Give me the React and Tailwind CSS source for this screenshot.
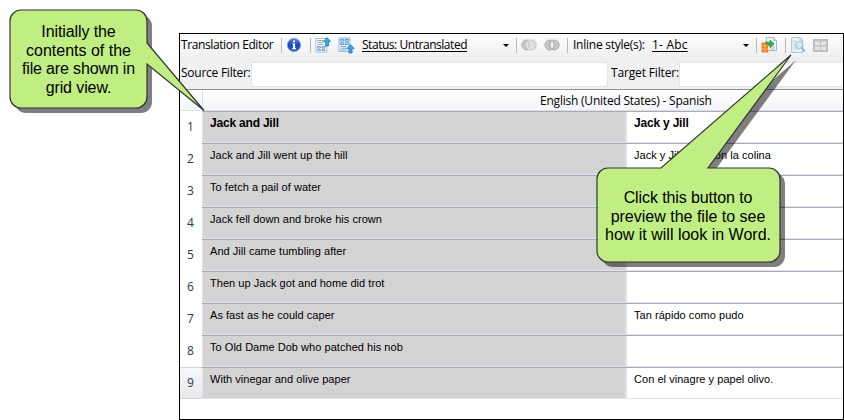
import React from "react";

const rows = [
  ["Jack and Jill", "Jack y Jill"],
  ["Jack and Jill went up the hill", "Jack y Jill subieron la colina"],
  ["To fetch a pail of water", ""],
  ["Jack fell down and broke his crown", ""],
  ["And Jill came tumbling after", ""],
  ["Then up Jack got and home did trot", ""],
  ["As fast as he could caper", "Tan rápido como pudo"],
  ["To Old Dame Dob who patched his nob", ""],
  ["With vinegar and olive paper", "Con el vinagre y papel olivo."],
];

const ui = "font-['Open_Sans','Noto_Sans',sans-serif] text-[12px] whitespace-nowrap";

function Separator({ className }) {
  return <span className={`h-[15px] w-px shrink-0 bg-[#b9b9b9] ${className}`} />;
}

function Caret({ className }) {
  return (
    <svg className={`h-[3px] w-[6px] shrink-0 ${className}`} viewBox="0 0 6 3">
      <path d="M0 0h6L3 3z" fill="#000" />
    </svg>
  );
}

function InfoIcon() {
  return (
    <svg className="ml-[4px] h-4 w-4 shrink-0" viewBox="0 0 16 16">
      <defs>
        <linearGradient id="info" x1="0" y1="0" x2="0" y2="1">
          <stop offset="0" stopColor="#5a86e8" />
          <stop offset=".5" stopColor="#1645c4" />
          <stop offset="1" stopColor="#2c63de" />
        </linearGradient>
      </defs>
      <circle cx="8" cy="8" r="6.6" fill="url(#info)" stroke="#7c9dce" strokeWidth=".9" />
      <path d="M7 3.4h2v1.9H7zM6.2 6.4h2.9v4.6h.9v1.2H6.2V11H7V7.6h-.8z" fill="#fff" />
    </svg>
  );
}

function UpArrow({ x, y }) {
  return (
    <path
      transform={`translate(${x} ${y})`}
      d="M4 .5 7.7 4.6H5.6V9H2.4V4.6H.3z"
      fill="#38a5e4"
      stroke="#1976b5"
      strokeWidth=".7"
    />
  );
}

function MoveSourceIcon() {
  return (
    <svg className="ml-[4px] h-4 w-4 shrink-0" viewBox="0 0 16 16">
      <path d="M.9 1.500h11v13.600H.9z" fill="#fff" stroke="#a5b5b4" strokeWidth=".9" />
      <path d="M2.5 3.500h6M2.500 5.500h6M2.500 7.500h6" stroke="#8fa9a3" />
      <path d="M2.500 9.500h3v1.500h-3zM7 9.500h3v1.500H7zM2.500 12.200h3v1.300h-3zM7 12.200h3v1.300H7z" fill="#dceeff" stroke="#5b97d8" strokeWidth=".8" />
      <UpArrow x={8} y={0} />
    </svg>
  );
}

function MoveTargetIcon() {
  return (
    <svg className="ml-[7px] h-[17px] w-[17px] shrink-0" viewBox="0 0 17 17">
      <path d="M1 1h11v13.500H1z" fill="#eef6ff" stroke="#8fb0d6" strokeWidth=".9" />
      <path d="M2.500 2.500h3v1.700h-3zM7 2.500h3.500v1.700H7zM2.500 5.800h3v1.700h-3zM7 5.800h3.500v1.700H7z" fill="#dceeff" stroke="#4385ca" strokeWidth=".8" />
      <path d="M2.500 9.500h6M2.500 11.200h6M2.500 12.900h6" stroke="#80acd6" />
      <UpArrow x={8.5} y={7} />
    </svg>
  );
}

function CirclesIcon({ className, joined }) {
  return (
    <svg className={`h-3 w-4 shrink-0 ${className}`} viewBox="0 0 16 12">
      <circle cx="5.8" cy="6" r="5" fill="#c6c6c6" stroke="#b0b0b0" />
      <circle cx="10.2" cy="6" r="5" fill={joined ? "#c6c6c6" : "#dedede"} stroke={joined ? "#b0b0b0" : "#c6c6c6"} />
      <path d="M8 1.6c2.900 2.500 2.900 6.300 0 8.800-2.900-2.500-2.900-6.300 0-8.800z" fill={joined ? "#efefef" : "#d2d2d2"} stroke={joined ? "#9d9d9d" : "#eee"} strokeWidth=".9" />
    </svg>
  );
}

function ExportIcon() {
  return (
    <svg className="ml-[4px] h-4 w-4 shrink-0" viewBox="0 0 16 16">
      <path d="M5.500.6h7l3 3v10h-10z" fill="#f5fbfd" stroke="#8eaab3" strokeWidth=".8" />
      <path d="M12.500.6v3h3M9 10h5M9 12h5" fill="none" stroke="#8eaab3" strokeWidth=".8" />
      <path d="M.5 5.500h6.700v10H.5z" fill="#f57c16" />
      <path d="M.5 8.800h6.700M.5 12.100h6.700M3.800 5.500v10" fill="none" stroke="#ffc58e" strokeWidth=".7" />
      <path d="M4 5.300h5V3.200l4.200 3.700L9 10.500V8.200H6.500" fill="#35b34a" stroke="#168331" strokeWidth=".7" />
    </svg>
  );
}

function PreviewIcon() {
  return (
    <svg className="ml-[5px] h-4 w-4 shrink-0" viewBox="0 0 16 16">
      <path d="M.7.6H9l2.800 2.800v12H.7z" fill="#f0f7f9" stroke="#9fc0c4" strokeWidth=".9" />
      <path d="M9 .6v3h3M2.300 4h4M2.300 6h2.500M2.300 8h2M2.300 10h3M2.300 12h7" fill="none" stroke="#a6c5c9" strokeWidth=".8" />
      <circle cx="8.300" cy="8" r="3.500" fill="#d6e8fa" stroke="#9fbbdc" />
      <path d="m10.900 10.900 2.600 3" stroke="#8aa5cf" strokeWidth="1.600" strokeLinecap="round" />
    </svg>
  );
}

function GridIcon() {
  return (
    <svg className="ml-[6px] h-[13px] w-[15px] shrink-0" viewBox="0 0 15 13">
      <path d="M.5.5h14v12H.5z" fill="#c2c2c2" stroke="#bdbdbd" />
      <path d="M2 2.500h5v3.500H2zM8 2.500h5v3.500H8zM2 7.500h5v3.500H2zM8 7.500h5v3.500H8z" fill="#e4e4e4" />
    </svg>
  );
}

function Toolbar() {
  return (
    <div className="flex h-[28px] items-center bg-linear-to-b from-[#fcfcfc] to-[#ededee] pb-[6px] text-black">
      <span className={`${ui} w-[93px] pl-px tracking-[-0.4px]`}>Translation Editor</span>
      <Separator className="ml-[8px]" />
      <InfoIcon />
      <Separator className="ml-[8px]" />
      <MoveSourceIcon />
      <MoveTargetIcon />
      <span className={`${ui} ml-[7px] w-[106px] leading-[14px] tracking-[-0.46px] underline underline-offset-2`}>Status: Untranslated</span>
      <Caret className="ml-[35px]" />
      <Separator className="ml-[7px]" />
      <CirclesIcon className="ml-[4px]" />
      <CirclesIcon className="ml-[7px]" joined />
      <Separator className="ml-[7px]" />
      <span className={`${ui} ml-[5px] w-[73px] tracking-[-0.25px]`}>Inline style(s):</span>
      <span className={`${ui} ml-[6px] w-[36px] leading-[14px] tracking-[0.2px] underline underline-offset-2`}>1- Abc</span>
      <Caret className="ml-[55px]" />
      <Separator className="ml-[7px]" />
      <ExportIcon />
      <Separator className="ml-[8px]" />
      <PreviewIcon />
      <GridIcon />
    </div>
  );
}

function FilterBar() {
  return (
    <div className="flex h-[27px] bg-[#f0f0f1] text-black">
      <span className={`${ui} w-[71px] pl-px leading-[22px] tracking-[-0.25px]`}>Source Filter:</span>
      <div className="h-[25px] w-[357px] border border-[#e1e3e7] bg-white" />
      <span className={`${ui} w-[71px] pl-[3px] leading-[22px] tracking-[-0.15px]`}>Target Filter:</span>
      <div className="h-[25px] flex-1 border border-r-0 border-[#e1e3e7] bg-white" />
    </div>
  );
}

function Row({ index, source, target }) {
  const last = index === rows.length - 1;
  const font =
    index === 0
      ? "text-[12px] font-bold tracking-[-0.2px]"
      : "text-[11px] tracking-[0.04px]";
  return (
    <div className="flex h-8">
      <div
        className={`w-[22px] shrink-0 pr-px text-center text-[#1e395b] ${ui} ${
          last
            ? "border-y border-[#d0d3d8] bg-linear-to-b from-[#f7f7f8] to-[#e9e9eb] leading-[29px]"
            : "leading-[31px]"
        }`}
      >
        {index + 1}
      </div>
      <div className={`flex flex-1 border-t border-b border-t-[#a9aab3] border-b-[#dfe4ee] font-['Liberation_Sans',Arial,sans-serif] leading-[13px] whitespace-nowrap text-black ${font}`}>
        <div className="w-[425px] shrink-0 border-r-2 border-l border-[#dfe2ea] bg-[#d3d3d3] pt-[5px] pl-[7px]">{source}</div>
        <div className="flex-1 bg-white pt-[5px] pl-[7px]">{target}</div>
      </div>
    </div>
  );
}

function EditorWindow() {
  return (
    <div className="ml-[179px] flex h-[387px] w-[665px] flex-col overflow-hidden border border-black bg-white">
      <Toolbar />
      <FilterBar />
      <div className="flex h-[22px] shrink-0 border-t border-[#8c8e99] bg-linear-to-b from-white to-[#f3f4f7]">
        <div className="w-[23px] border-r border-b border-[#dcdfe5]" />
        <div className={`flex-1 border-b border-[#dcdfe5] pl-[337px] leading-[21px] tracking-[-0.22px] text-black ${ui}`}>
          English (United States) - Spanish
        </div>
      </div>
      {rows.map(([source, target], i) => (
        <Row key={i} index={i} source={source} target={target} />
      ))}
    </div>
  );
}

function Callouts() {
  return (
    <>
      <svg className="absolute inset-0 h-[420px] w-[844px]" viewBox="0 0 844 420">
        <rect x="15" y="15" width="137" height="98" rx="11" fill="#000" fillOpacity=".5" />
        <path
          d="M21 10H136a11 11 0 0 1 11 11V43L204 110.500 147 64V97a11 11 0 0 1-11 11H21a11 11 0 0 1-11-11V21a11 11 0 0 1 11-11z"
          fill="#c1ee83" stroke="#333" strokeWidth="1.2"
        />
        <g transform="translate(5 5)">
          <path d="M608 168H661L791 55 708 168H769a11 11 0 0 1 11 11V251a11 11 0 0 1-11 11H608a11 11 0 0 1-11-11V179a11 11 0 0 1 11-11z" fill="#000" fillOpacity=".5" />
        </g>
        <path
          d="M608 168H661L791 55 708 168H769a11 11 0 0 1 11 11V251a11 11 0 0 1-11 11H608a11 11 0 0 1-11-11V179a11 11 0 0 1 11-11z"
          fill="#c1ee83" stroke="#333" strokeWidth="1.2"
        />
      </svg>
      <div className="absolute top-[23px] left-[10px] w-[137px] text-center font-['Liberation_Sans',Arial,sans-serif] text-[16px] leading-[18.6px] whitespace-nowrap text-black">
        <div className="tracking-[-0.1px]">Initially the</div>
        <div>contents of the</div>
        <div className="tracking-[-0.15px]">file are shown in</div>
        <div className="tracking-[-0.1px]">grid view.</div>
      </div>
      <div className="absolute top-[189px] left-[597px] w-[182px] text-center font-['Liberation_Sans',Arial,sans-serif] text-[16px] leading-[18.5px] whitespace-nowrap text-black">
        <div className="tracking-[-0.1px]">Click this button to</div>
        <div>preview the file to see</div>
        <div>how it will look in Word.</div>
      </div>
    </>
  );
}

export default function App() {
  return (
    <div className="relative h-[420px] w-[844px] overflow-hidden bg-white pt-[33px]">
      <EditorWindow />
      <Callouts />
    </div>
  );
}
